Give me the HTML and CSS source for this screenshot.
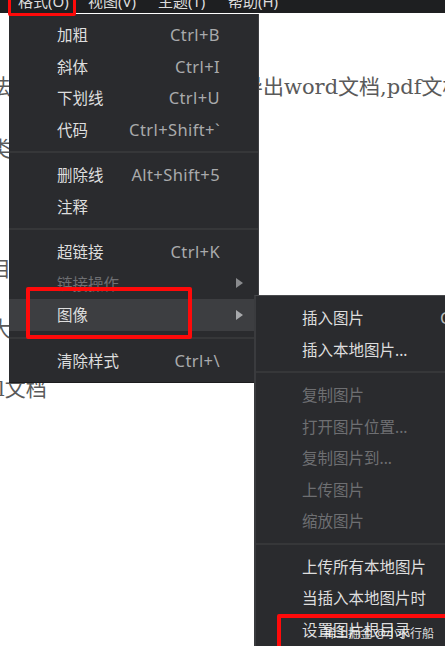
FILE: index.html
```html
<!DOCTYPE html>
<html>
<head>
<meta charset="utf-8">
<link rel="stylesheet" href="styles.css">
</head>
<body>
<div class="menubar">
  <span class="mb-item">格式(O)</span>
  <span class="mb-item">视图(V)</span>
  <span class="mb-item">主题(T)</span>
  <span class="mb-item">帮助(H)</span>
</div>

<div class="doc">
  <p class="line l1">法，并且可以直接一键快速导出word文档,pdf文档</p>
  <p class="line">类</p>
  <p class="line">&nbsp;</p>
  <p class="line">目</p>
  <p class="line">大</p>
  <p class="line l6">l文档</p>
</div>

<div class="menu main">
  <div class="item"><span class="label">加粗</span><span class="key">Ctrl+B</span></div>
  <div class="item"><span class="label">斜体</span><span class="key">Ctrl+I</span></div>
  <div class="item"><span class="label">下划线</span><span class="key">Ctrl+U</span></div>
  <div class="item"><span class="label">代码</span><span class="key">Ctrl+Shift+`</span></div>
  <div class="sep"></div>
  <div class="item"><span class="label">删除线</span><span class="key">Alt+Shift+5</span></div>
  <div class="item"><span class="label">注释</span></div>
  <div class="sep"></div>
  <div class="item"><span class="label">超链接</span><span class="key">Ctrl+K</span></div>
  <div class="item disabled"><span class="label">链接操作</span><span class="arrow"></span></div>
  <div class="item active"><span class="label">图像</span><span class="arrow"></span></div>
  <div class="sep"></div>
  <div class="item"><span class="label">清除样式</span><span class="key">Ctrl+\</span></div>
</div>

<div class="menu sub">
  <div class="item"><span class="label">插入图片</span><span class="key">Ctrl+Shift+I</span></div>
  <div class="item"><span class="label">插入本地图片...</span></div>
  <div class="sep"></div>
  <div class="item disabled"><span class="label">复制图片</span></div>
  <div class="item disabled"><span class="label">打开图片位置...</span></div>
  <div class="item disabled"><span class="label">复制图片到...</span></div>
  <div class="item disabled"><span class="label">上传图片</span></div>
  <div class="item disabled"><span class="label">缩放图片</span></div>
  <div class="sep"></div>
  <div class="item"><span class="label">上传所有本地图片</span></div>
  <div class="item"><span class="label">当插入本地图片时</span></div>
  <div class="item"><span class="label">设置图片根目录</span></div>
</div>

<div class="redbox rb-format"></div>
<div class="redbox rb-image"></div>
<div class="redbox rb-root"></div>
<div class="watermark">稀土掘金 @小小行船</div>
</body>
</html>
```

FILE: styles.css
```css
html, body {
  margin: 0;
  padding: 0;
  width: 445px;
  height: 646px;
  overflow: hidden;
  background: #ffffff;
}

body {
  position: relative;
  font-family: "Noto Sans", "Noto Sans CJK SC", sans-serif;
}

.menubar {
  height: 13px;
  background: #1e1f21;
  display: flex;
  padding-left: 18px;
  overflow: hidden;
}

.mb-item {
  width: 70px;
  flex: none;
  color: #dcdcdc;
  font-size: 15px;
  line-height: 15px;
  margin-top: -6px;
  white-space: nowrap;
}

.doc {
  margin-left: -10px;
  padding-top: 44px;
  color: #5a5a5a;
  font-family: "DejaVu Serif", "Noto Sans CJK SC", serif;
  font-size: 21px;
}

.line {
  margin: 0;
  height: 60px;
  line-height: 60px;
  white-space: nowrap;
}

.l1 {
  height: 62px;
}

.l6 {
  margin-left: 8px;
}

.menu {
  position: absolute;
  background: #2a2b2e;
  color: #dedede;
  font-size: 15.5px;
  white-space: nowrap;
  box-sizing: border-box;
}

.main {
  left: 9px;
  top: 14px;
  width: 250px;
  height: 369px;
  padding-top: 5px;
  border-right: 1px solid #3e3f42;
  border-bottom: 1px solid #1c1c1e;
}

.sub {
  left: 254px;
  top: 295px;
  width: 320px;
  height: 380px;
  padding-top: 6px;
  border-left: 2px solid #3a3b3e;
  border-top: 1px solid #4a4b4e;
}

.item {
  height: 31.5px;
  display: flex;
  align-items: center;
  padding-left: 48px;
  padding-right: 38px;
}

.sub .item {
  padding-left: 46px;
}

.label {
  flex: 1;
}

.sub .label {
  flex: none;
  width: 138px;
}

.key {
  color: #a9aaac;
  font-size: 16.5px;
  letter-spacing: 0.4px;
}

.sub .key {
  color: #bbbbbb;
}

.disabled {
  color: #6e6f72;
}

.active {
  background: #3d3e41;
}

.arrow {
  width: 0;
  height: 0;
  border-top: 5px solid transparent;
  border-bottom: 5px solid transparent;
  border-left: 7px solid #8a8b8e;
  margin-right: -23px;
}

.active .arrow {
  border-left-color: #a8a9ac;
}

.sep {
  height: 14px;
  box-sizing: border-box;
  border-top: 6px solid transparent;
  background-clip: padding-box;
  position: relative;
}

.sep::after {
  content: "";
  display: block;
  height: 2px;
  background: #363739;
}

.redbox {
  position: absolute;
  border: 4px solid #ff0a0a;
  border-radius: 2px;
  box-sizing: border-box;
}

.rb-format {
  left: 8px;
  top: -6px;
  width: 68px;
  height: 22px;
  border-width: 3px;
}

.rb-image {
  left: 26px;
  top: 287px;
  width: 166px;
  height: 52px;
}

.rb-root {
  left: 277px;
  top: 614px;
  width: 190px;
  height: 60px;
}

.watermark {
  position: absolute;
  left: 324px;
  top: 624px;
  font-size: 12px;
  color: rgba(255, 255, 255, 0.85);
  white-space: nowrap;
}
```
